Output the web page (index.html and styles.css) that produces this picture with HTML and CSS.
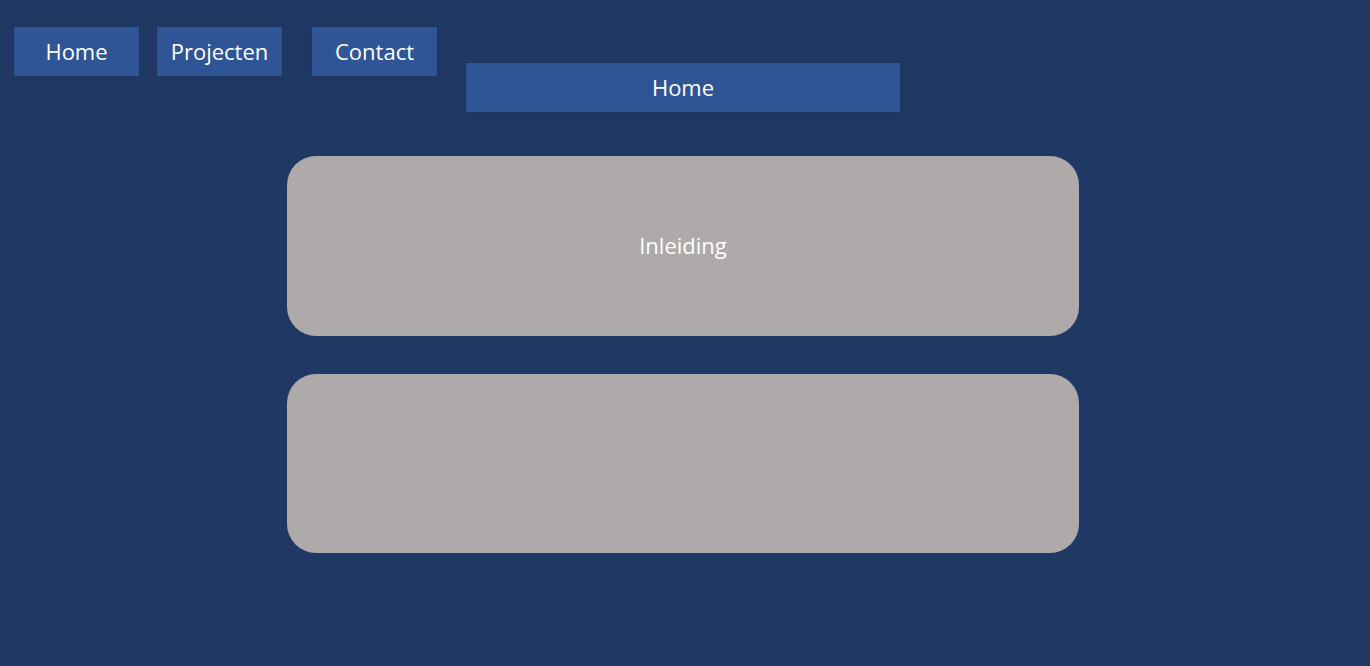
FILE: index.html
```html
<!DOCTYPE html>
<html lang="nl">
<head>
<meta charset="utf-8">
<title>Home</title>
<link rel="stylesheet" href="styles.css">
</head>
<body>
  <nav class="nav">
    <a class="nav-btn" href="#">Home</a>
    <a class="nav-btn nav-btn--second" href="#">Projecten</a>
    <a class="nav-btn nav-btn--third" href="#">Contact</a>
  </nav>
  <main class="main">
    <div class="title-bar">Home</div>
    <section class="card card--first">Inleiding</section>
    <section class="card card--second"></section>
  </main>
</body>
</html>
```
FILE: styles.css
```css
html, body {
  margin: 0;
  padding: 0;
  background: #203864;
  height: 100%;
}
body {
  font-family: "Open Sans", "Noto Sans", sans-serif;
  color: #ffffff;
  overflow: hidden;
}
.nav {
  display: flex;
  padding: 26px 0 0 13px;
}
.nav-btn {
  box-sizing: border-box;
  width: 127px;
  height: 51px;
  background: #2f5597;
  border: 1px solid #1c3461;
  color: #ffffff;
  text-decoration: none;
  font-size: 22px;
  display: flex;
  align-items: center;
  justify-content: center;
  padding-bottom: 1px;
}
.nav-btn--second {
  margin-left: 16px;
}
.nav-btn--third {
  margin-left: 28px;
}
.main {
  display: flex;
  flex-direction: column;
  align-items: center;
  padding-right: 4px;
}
.title-bar {
  box-sizing: border-box;
  width: 436px;
  height: 51px;
  margin-top: -15px;
  background: #2f5597;
  border: 1px solid #1c3461;
  font-size: 22px;
  display: flex;
  align-items: center;
  justify-content: center;
  padding-bottom: 1px;
}
.card {
  box-sizing: border-box;
  width: 792px;
  background: #aeaaaa;
  border-radius: 29px;
  display: flex;
  align-items: center;
  justify-content: center;
  font-size: 22px;
}
.card--first {
  height: 180px;
  margin-top: 43px;
  padding-bottom: 2px;
}
.card--second {
  height: 179px;
  margin-top: 38px;
}
```
